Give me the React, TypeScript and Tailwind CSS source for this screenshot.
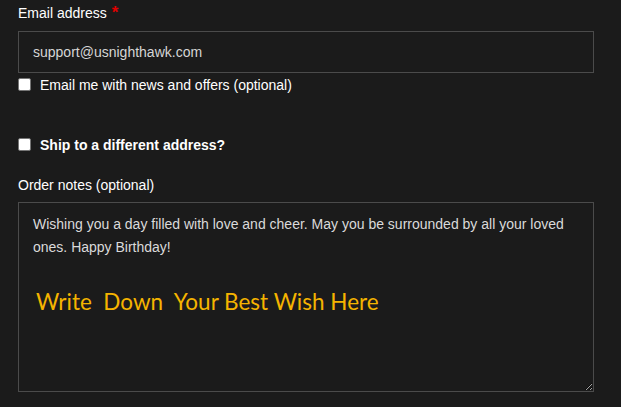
import React from "react";

function Check({ label, bold }: { label: string; bold?: boolean }) {
  return (
    <div className="flex h-[15px] items-center gap-[9px]">
      <span className="h-[13px] w-[13px] shrink-0 rounded-[2px] border border-[#767676] bg-white" />
      <span className={bold ? "font-bold leading-[16px]" : "leading-[16px]"}>{label}</span>
    </div>
  );
}

export default function App() {
  return (
    <div className="min-h-[407px] w-full bg-[#1b1b1b] px-[18px] pt-[3px] font-['Liberation_Sans',Arial,sans-serif] text-[14px] text-white">
      <div className="flex w-[576px] flex-col">
        <label className="flex h-[20px] items-start gap-[5px] leading-[20px]">
          Email address
          <span className="text-[17px] font-bold leading-[20px] text-[#e00000]">*</span>
        </label>
        <div className="mt-[8px] flex h-[42px] items-center border border-[#4b4b4b] pl-[14px] text-[#d6d6d6]">
          support@usnighthawk.com
        </div>
        <div className="mt-[4px]">
          <Check label="Email me with news and offers (optional)" />
        </div>
        <div className="mt-[45px]">
          <Check label="Ship to a different address?" bold />
        </div>
        <label className="mt-[25px] leading-[16px]">Order notes (optional)</label>
        <div className="relative mt-[9px] h-[190px]">
          <textarea
            readOnly
            className="block h-full w-full resize-y border border-[#4b4b4b] bg-transparent px-[14px] pt-[10px] leading-[23px] text-[#dadada] outline-none"
            defaultValue="Wishing you a day filled with love and cheer. May you be surrounded by all your loved ones. Happy Birthday!"
          />
          <div className="pointer-events-none absolute left-[18px] top-[85px] whitespace-pre font-['Lato',sans-serif] text-[22.5px] leading-[30px] text-[#f5b400]">
            {"Write  Down  Your Best Wish Here"}
          </div>
        </div>
      </div>
    </div>
  );
}
